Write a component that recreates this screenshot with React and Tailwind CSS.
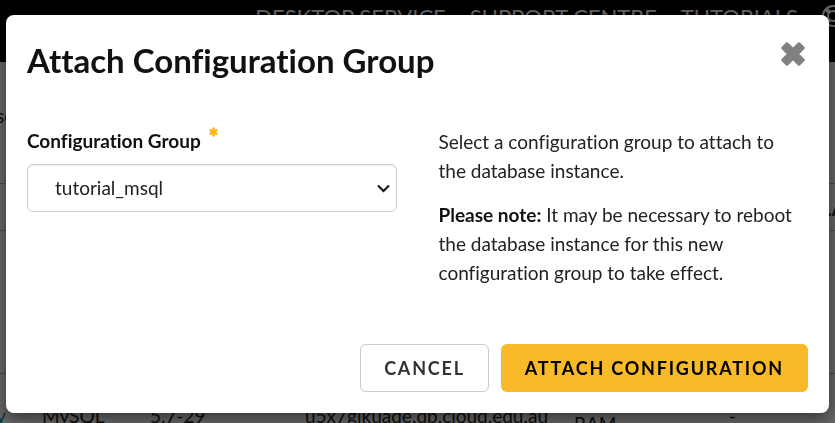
import React from "react";

function SiteHeader() {
  return (
    <header className="flex h-[62px] shrink-0 items-start justify-end gap-6 bg-black pt-[5px] -mr-[9px] text-[22px] leading-6 whitespace-nowrap text-white">
      <span>DESKTOP SERVICE</span>
      <span>SUPPORT CENTRE</span>
      <span>TUTORIALS</span>
      <svg width="22" height="22" viewBox="0 0 22 22" fill="none" stroke="currentColor" strokeWidth="2" aria-hidden="true">
        <circle cx="11" cy="11" r="10" />
        <circle cx="11" cy="11" r="5" />
        <path d="M4 4l4 4M18 4l-4 4M4 18l4-4M18 18l-4-4" strokeWidth="4" />
      </svg>
    </header>
  );
}

function InstancesPage() {
  return (
    <div className="flex h-screen flex-col overflow-hidden bg-white text-[19px] leading-7 text-[#222]">
      <SiteHeader />
      <div className="-ml-1 flex-1 pt-10">se</div>
      <div className="flex h-12 shrink-0 items-center justify-end border-y border-[#bbb] pt-1 font-bold -mr-2.5">.A</div>
      <div className="h-[142px] shrink-0" />
      <div className="h-[50px] shrink-0 border-t border-[#bbb]">
        <table className="mt-7 w-full table-fixed border-collapse">
          <tbody>
            <tr className="align-top whitespace-nowrap">
              <td className="w-[42px] text-[#0088aa]">
                <span className="-ml-1">y</span>
              </td>
              <td className="w-[108px]">MySQL</td>
              <td className="w-[155px]">5.7-29</td>
              <td className="w-[269px]">u5x7gjkuade.db.cloud.edu.au</td>
              <td className="w-[155px] pt-2">RAM</td>
              <td>-</td>
            </tr>
          </tbody>
        </table>
      </div>
    </div>
  );
}

function AttachDialog() {
  return (
    <section
      role="dialog"
      aria-modal="true"
      aria-labelledby="dialog-title"
      className="w-full rounded-lg bg-white px-[21px] pb-[21px] text-[19px] leading-7 text-[#222] shadow-[0_5px_15px_rgba(0,0,0,0.5)]"
    >
      <header className="flex items-start justify-between pt-[25px]">
        <h1 id="dialog-title" className="text-[33px] leading-10 font-bold text-[#111]">
          Attach Configuration Group
        </h1>
        <button type="button" aria-label="Close" className="mr-[3px] pt-0.5 text-[#808080]">
          <svg width="24" height="24" viewBox="0 0 24 24" fill="currentColor" stroke="currentColor" strokeWidth="2.5" strokeLinejoin="round" aria-hidden="true">
            <path d="M6 1.5L12 7.5 18 1.5 22.5 6 16.5 12 22.5 18 18 22.5 12 16.5 6 22.5 1.5 18 7.5 12 1.5 6z" />
          </svg>
        </button>
      </header>

      <div className="grid grid-cols-2 gap-[42px] pt-[47px]">
        <div>
          <label htmlFor="config-group" className="flex items-start gap-2 font-bold text-[#111]">
            Configuration Group
            <svg width="9" height="10" viewBox="0 0 9 10" stroke="#fbb117" strokeWidth="2.4" aria-hidden="true">
              <path d="M4.5 0.5v9M0.6 2.75l7.8 4.5M8.4 2.75l-7.8 4.5" />
            </svg>
          </label>
          <div className="relative mt-[9px]">
            <select
              id="config-group"
              className="h-12 w-full appearance-none rounded-md border border-[#ccc] bg-white pl-[27px] shadow-[inset_0_1px_1px_rgba(0,0,0,0.08)]"
            >
              <option>tutorial_msql</option>
            </select>
            <svg className="pointer-events-none absolute top-5 right-[7px]" width="13" height="9" viewBox="0 0 13 9" fill="none" stroke="#111" strokeWidth="2" aria-hidden="true">
              <path d="M1 1.5l5.5 5.5L12 1.5" />
            </svg>
          </div>
        </div>
        <div className="flex flex-col gap-[15px] pr-2 leading-[29px]">
          <p>Select a configuration group to attach to the database instance.</p>
          <p>
            <strong className="text-[#111]">Please note:</strong> It may be necessary to reboot the database instance for this new
            configuration group to take effect.
          </p>
        </div>
      </div>

      <footer className="flex justify-end gap-3 pt-[57px] text-lg font-bold tracking-widest">
        <button type="button" className="h-12 rounded-md border border-[#ccc] px-[23px] text-[#333]">
          CANCEL
        </button>
        <button type="button" className="h-12 rounded-md bg-[#f8ba28] px-6 text-black">
          ATTACH CONFIGURATION
        </button>
      </footer>
    </section>
  );
}

export default function App() {
  return (
    <div className="font-[Lato,'Open_Sans',sans-serif] [font-variant-ligatures:none]">
      <InstancesPage />
      <div className="fixed inset-0 bg-black/60 px-1.5 pt-[15px]">
        <AttachDialog />
      </div>
    </div>
  );
}
